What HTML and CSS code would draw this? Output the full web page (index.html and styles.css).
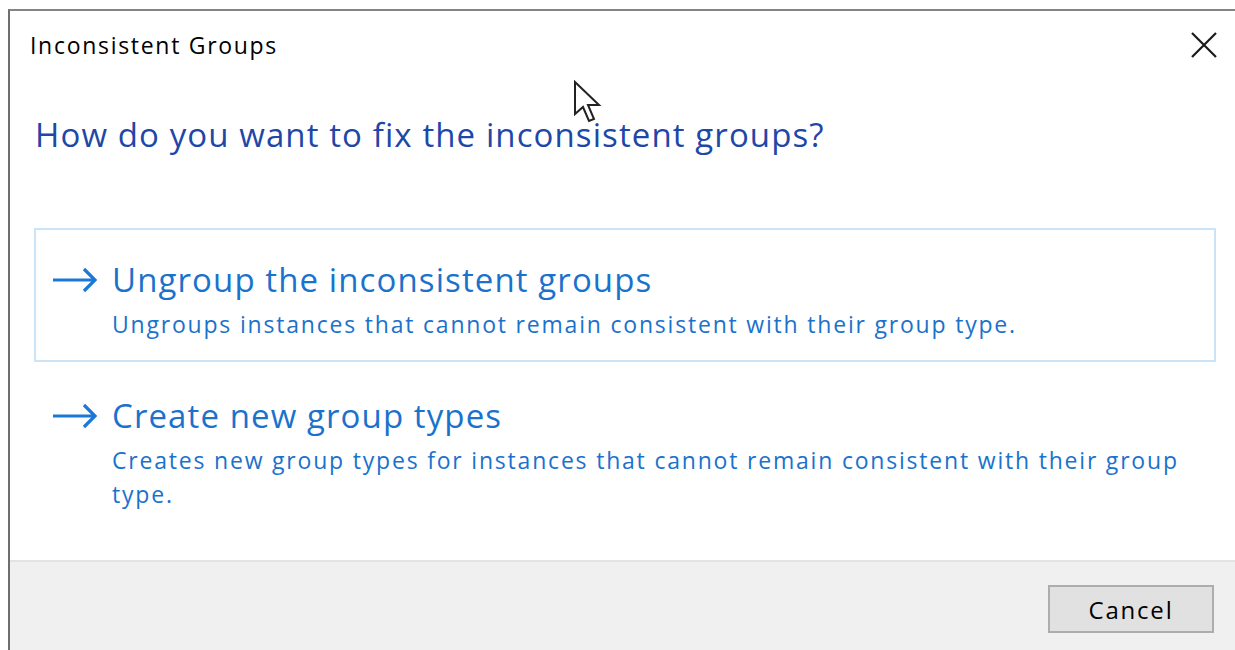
FILE: index.html
```html
<!DOCTYPE html>
<html lang="en">
<head>
<meta charset="utf-8">
<title>Inconsistent Groups</title>
<link rel="stylesheet" href="styles.css">
</head>
<body>
<div class="desktop">
  <div class="window">
    <div class="titlebar">
      <span class="title">Inconsistent Groups</span>
      <button class="close" aria-label="Close">
        <svg width="26" height="26" viewBox="0 0 26 26"><path d="M1 1 L25 25 M25 1 L1 25" stroke="#1a1a1a" stroke-width="2.2" fill="none"/></svg>
      </button>
    </div>
    <div class="content">
      <h1 class="instruction">How do you want to fix the inconsistent groups?</h1>
      <div class="links">
        <a class="cmd hover" href="#">
          <svg class="arrow" width="46" height="26" viewBox="0 0 46 26"><path d="M1 13 H43 M32 2 L43 13 L32 24" stroke="#1a78d6" stroke-width="3.2" fill="none"/></svg>
          <span class="cmd-text">
            <span class="cmd-title">Ungroup the inconsistent groups</span>
            <span class="cmd-desc">Ungroups instances that cannot remain consistent with their group type.</span>
          </span>
        </a>
        <a class="cmd" href="#">
          <svg class="arrow" width="46" height="26" viewBox="0 0 46 26"><path d="M1 13 H43 M32 2 L43 13 L32 24" stroke="#1a78d6" stroke-width="3.2" fill="none"/></svg>
          <span class="cmd-text">
            <span class="cmd-title">Create new group types</span>
            <span class="cmd-desc">Creates new group types for instances that cannot remain consistent with their group type.</span>
          </span>
        </a>
      </div>
    </div>
    <div class="footer">
      <button class="btn">Cancel</button>
    </div>
    <svg class="cursor" width="32" height="44" viewBox="0 0 32 44"><path d="M2 2 L2 34 L10 27 L16 41 L21 39 L15 25 L26 25 Z" fill="#fff" stroke="#222" stroke-width="2" stroke-linejoin="miter"/></svg>
  </div>
</div>
</body>
</html>
```

FILE: styles.css
```css
html, body {
  margin: 0;
  padding: 0;
  background: #ffffff;
}

.desktop {
  width: 1235px;
  height: 650px;
  padding: 9px 0 0 8px;
  box-sizing: border-box;
  overflow: hidden;
  font-family: "Open Sans", "Noto Sans", sans-serif;
}

.window {
  position: relative;
  height: 660px;
  width: 1240px;
  border-top: 2px solid #858585;
  border-left: 2px solid #6e6e6e;
  background: #ffffff;
  display: flex;
  flex-direction: column;
}

.titlebar {
  height: 70px;
  display: flex;
  align-items: center;
  justify-content: space-between;
  padding: 0 0 0 20px;
  box-sizing: border-box;
}

.title {
  font-size: 23px;
  letter-spacing: 1.7px;
  color: #000;
  margin-top: -2px;
}

.close {
  margin-right: 33px;
  margin-top: -2px;
  background: none;
  border: 0;
  padding: 0;
  width: 26px;
  height: 26px;
  display: flex;
}

.content {
  flex: 1;
  padding: 0 0 0 24px;
}

.instruction {
  margin: 31px 0 0 1px;
  font-size: 33px;
  letter-spacing: 1.1px;
  font-weight: normal;
  color: #1e47a8;
  line-height: 46px;
}

.links {
  margin-top: 70px;
  width: 1182px;
  display: flex;
  flex-direction: column;
  gap: 2px;
}

.cmd {
  display: flex;
  align-items: flex-start;
  text-decoration: none;
  border: 2px solid transparent;
  padding: 27px 10px 19px 16px;
  gap: 14px;
}

.cmd.hover {
  border-color: #cce4f7;
}

.arrow {
  margin-top: 10px;
  flex: none;
}

.cmd-text {
  display: flex;
  flex-direction: column;
  gap: 4px;
}

.cmd-title {
  font-size: 33px;
  letter-spacing: 1.1px;
  line-height: 46px;
  color: #1a72cc;
}

.cmd-desc {
  font-size: 23px;
  letter-spacing: 1.8px;
  line-height: 34px;
  color: #1a72cc;
}

.footer {
  height: 100px;
  flex: none;
  background: #f0f0f0;
  border-top: 2px solid #e3e3e3;
  display: flex;
  align-items: flex-start;
  padding: 23px 0 0 1038px;
  box-sizing: border-box;
  margin-bottom: 11px;
}

.btn {
  width: 166px;
  height: 48px;
  background: #e1e1e1;
  border: 2px solid #adadad;
  font-family: inherit;
  font-size: 24px;
  letter-spacing: 1.8px;
  color: #000;
  padding: 0;
}

.cursor {
  position: absolute;
  left: 563px;
  top: 69px;
}
```
